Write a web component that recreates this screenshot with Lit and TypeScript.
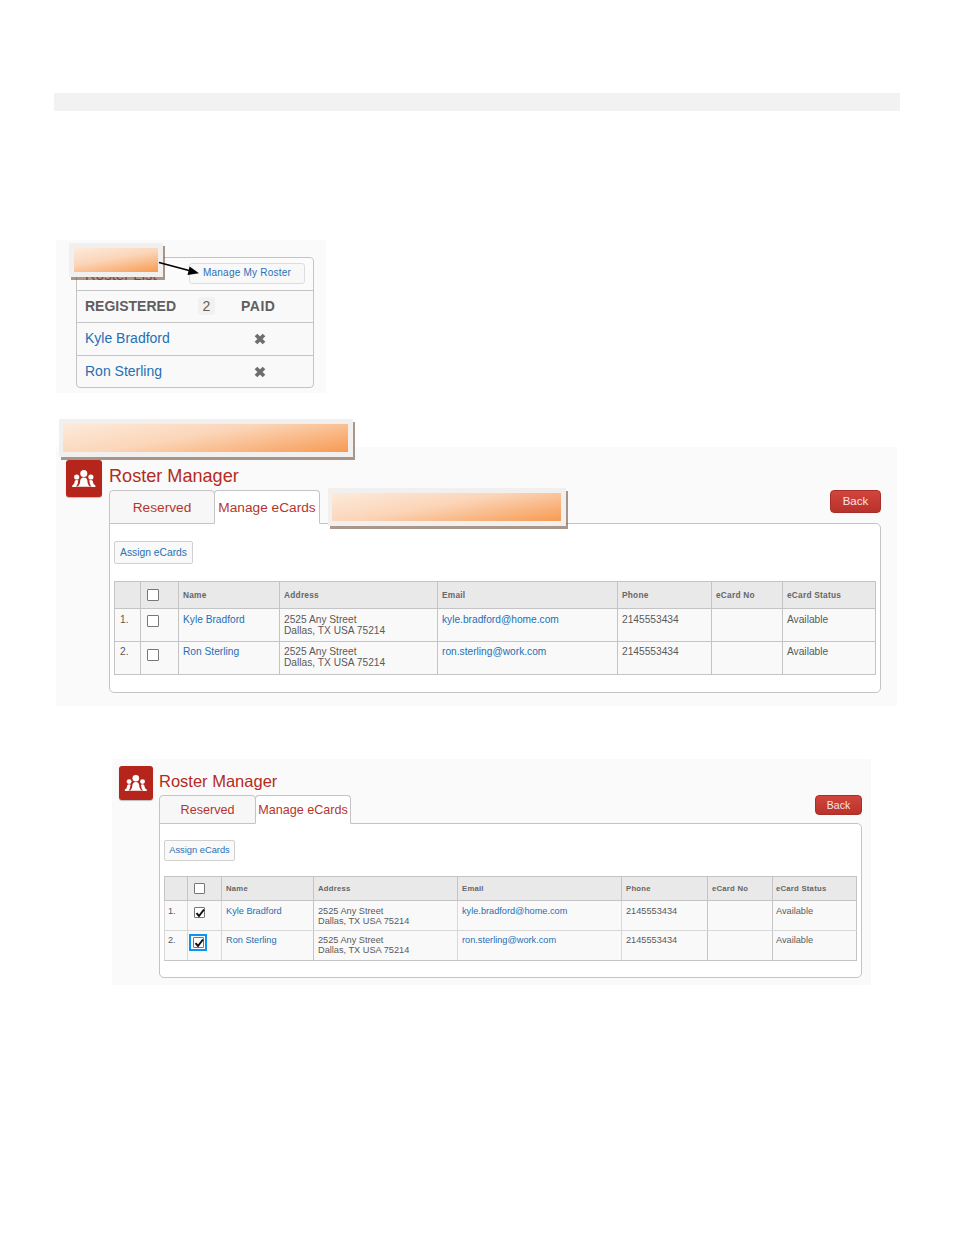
import { LitElement, html, css, svg } from "lit";
import { customElement } from "lit/decorators.js";

const people = html`<svg class="people" viewBox="0 0 36 36" aria-hidden="true"><g fill="#fff"><circle cx="17.800" cy="13" r="3.500"/><path d="M17.800 17c-2.600 0-3.700 1.800-3.700 4.200 0 1.900-1 3.200-2.300 4.800h12c-1.300-1.600-2.300-2.900-2.300-4.800 0-2.400-1.100-4.200-3.700-4.200z"/><circle cx="10.700" cy="16.500" r="2.600"/><path d="M10.700 19.400c-1.600 0-2.100 1.100-2.200 2.400-.1 1.500-1 2.500-2.300 3.200v1.400h23.200V25c-1.300-.7-2.200-1.700-2.300-3.200-.1-1.300-.6-2.400-2.200-2.400-.8 0-1.300.2-1.700.5.2.6.4 1.300.4 2 .1 1.800.9 3 2.100 4.100H9.800c1.200-1.100 2-2.300 2.100-4.100 0-.7.200-1.400.4-2-.4-.3-.8-.5-1.600-.5z"/><circle cx="24.900" cy="16.500" r="2.600"/></g></svg>`;

const arrow = svg`<path d="M0 1.500 31 9.800" stroke="#000" stroke-width="1.700" fill="none"/><path d="M40 12.200 28.500 14 30.600 5.500z" fill="#000"/>`;

const rows = [
  { n: "1.", name: "Kyle Bradford", email: "kyle.bradford@home.com" },
  { n: "2.", name: "Ron Sterling", email: "ron.sterling@work.com" },
];

@customElement("app-root")
export class AppRoot extends LitElement {
  static styles = css`
    :host { display: block; width: 954px; height: 1235px; background: #fff; font-family: "Liberation Sans", Arial, sans-serif; overflow: hidden; }
    .page { padding: 93px 0 0 0; }
    .bar { height: 18px; width: 846px; margin-left: 54px; background: #f2f2f2; }

    .shot { position: relative; background: #fafafa; box-sizing: border-box; }
    .shot-list { width: 270px; height: 153px; margin: 129px 0 0 56px; padding: 17px 12px 0 20px; }
    .shot-big { width: 841px; height: 259px; margin: 54px 0 0 56px; padding: 13px 16px 0 10px; display: flex; gap: 7px; }
    .shot-small { width: 759px; height: 226px; margin: 53px 0 0 112px; padding: 7px 9px 0 7px; display: flex; gap: 6px; }

    .callout { position: absolute; box-sizing: border-box; background: #f1f0ee; box-shadow: 2px 3px 0 rgba(112, 82, 62, .6); padding: 5px; display: flex; }
    .callout i { flex: 1; background: linear-gradient(170deg, #fdeadb 0%, #fbd5b8 45%, #f79a52 100%); }
    .c1 { left: 13px; top: 3px; width: 94px; height: 34px; }
    .c2 { left: 3px; top: -28px; width: 294px; height: 38px; padding-left: 4px; }
    .c3 { left: 272px; top: 41px; width: 238px; height: 38px; padding-left: 4px; }
    .arrow { position: absolute; left: 103px; top: 21px; width: 41px; height: 16px; overflow: visible; }

    .card { border: 1px solid #c4c4c4; border-radius: 4px; background: #f9f9f9; height: 131px; box-sizing: border-box; color: #555; }
    .card-head { height: 32px; display: flex; justify-content: space-between; align-items: flex-start; padding: 5px 8px 0 8px; box-sizing: border-box; background: #fbfbfb; border-radius: 4px 4px 0 0; }
    .list-title { font-size: 15px; color: #b52a22; margin-top: 3px; line-height: 17px; }
    .manage { height: 21px; width: 116px; box-sizing: border-box; border: 1px solid #ddd; border-radius: 3px; background: #f8f8f8; color: #2a70b5; font-size: 10px; line-height: 17px; text-align: center; letter-spacing: .22px; }
    .card-row { height: 33px; box-sizing: border-box; border-top: 1px solid #c4c4c4; display: grid; grid-template-columns: 113px 43px 1fr; align-items: center; padding: 0 0 2px 8px; font-size: 14px; }
    .card-row.reg { height: 32px; font-weight: bold; color: #5f5f5f; }
    .badge { width: 17px; height: 18px; background: #f1f1f1; border-radius: 3px; font-weight: normal; text-align: center; line-height: 19px; font-size: 14px; }
    .card-row a { color: #1f6fb5; grid-column: 1 / 3; }
    .x { padding-left: 13px; display: block; }
    .x svg { width: 12px; height: 12px; display: block; margin-top: 1px; }
    .paid { letter-spacing: .5px; }

    .ico { background: #b5251c; border-radius: 3px; box-shadow: 0 1px 1px rgba(0,0,0,.25); flex: none; display: flex; }
    .people { width: 100%; height: 100%; display: block; }
    .shot-big .ico { width: 36px; height: 37px; }
    .shot-small .ico { width: 34px; height: 34px; }
    .main { flex: 1; min-width: 0; }
    .title { color: #b52a22; }
    .shot-big .title { font-size: 18.100px; height: 30px; line-height: 33px; }
    .shot-small .title { font-size: 16.500px; height: 29px; line-height: 30px; }

    .tabbar { display: flex; justify-content: space-between; align-items: flex-start; position: relative; margin-bottom: -1px; }
    .tabs { display: flex; }
    .tab { box-sizing: border-box; border: 1px solid #c4c4c4; border-radius: 4px 4px 0 0; text-align: center; color: #b5352c; background: #f7f7f7; position: relative; }
    .tab.on { background: #fff; border-bottom-color: #fff; z-index: 1; white-space: nowrap; }
    .shot-big .tab { width: 106px; height: 34px; font-size: 13.700px; line-height: 33px; }
    .shot-big .tab + .tab { margin-left: -1px; }
    .shot-small .tab { width: 97px; height: 29px; font-size: 12.600px; line-height: 29px; }
    .shot-small .tab + .tab { margin-left: -1px; width: 96px; }
    .back { box-sizing: border-box; background: linear-gradient(#d2453d, #b8322b); border: 1px solid #aa2e28; border-radius: 4px; color: #f6e6e6; text-align: center; }
    .shot-big .back { width: 51px; height: 23px; font-size: 11.500px; line-height: 21px; }
    .shot-small .back { width: 47px; height: 20px; font-size: 10.500px; line-height: 18px; }

    .panel { background: #fff; border: 1px solid #c4c4c4; border-radius: 0 5px 5px 5px; box-sizing: border-box; padding: 0 4px; }
    .shot-big .panel { height: 170px; padding-top: 17px; }
    .shot-small .panel { height: 155px; padding-top: 16px; }
    .assign { box-sizing: border-box; border: 1px solid #d0d0d0; border-radius: 2px; background: #f9f9f9; color: #2a70b5; text-align: center; }
    .shot-big .assign { width: 79px; height: 23px; font-size: 10.300px; line-height: 21px; margin-bottom: 17px; }
    .shot-small .assign { width: 71px; height: 21px; font-size: 9.300px; line-height: 19px; margin-bottom: 15px; }

    table { border-collapse: collapse; table-layout: fixed; }
    th, td { border: 1px solid #c4c4c4; text-align: left; vertical-align: top; box-sizing: border-box; padding: 0 4px; color: #5a5a5a; font-weight: normal; overflow: hidden; white-space: nowrap; }
    th { background: #e9e9e9; font-weight: bold; vertical-align: middle; color: #666; letter-spacing: .25px; }
    td { background: #f9f9f9; }
    td a { color: #1f6fb5; }
    .shot-big th { font-size: 8.300px; height: 27px; }
    .shot-big td { font-size: 10.200px; line-height: 11px; height: 33px; padding-top: 5px; }
    .shot-big tr + tr td { padding-top: 4px; }
    .shot-big td:first-child { padding-left: 5px; }
    .shot-small th { font-size: 7.700px; height: 24px; }
    .shot-small td { font-size: 9.200px; line-height: 10px; height: 30px; padding-top: 5px; }
    .shot-small tr + tr td { padding-top: 4px; }
    .shot-small td:first-child { padding-left: 3px; }
    .shot-small th:last-child, .shot-small td:last-child { padding-left: 3px; }
    .shot-small tbody td { border-color: #d8d8d8; }
    .shot-small tbody td:nth-child(3), .shot-small tbody td:nth-child(6), .shot-small tbody td:nth-child(7), .shot-small tbody td:last-child { border-right-color: #c4c4c4; }
    .shot-small tbody tr:last-child td { border-bottom-color: #c4c4c4; }
    th.box, td.box { padding: 0 0 0 6px; line-height: 0; }
    .shot-big td.box { padding-top: 6px; }
    .shot-big tr + tr td.box { padding-top: 7px; }
    .shot-small td.box { padding-top: 6px; }
    .shot-small tr + tr td.box { padding: 3px 0 0 1px; }
    .cb { display: inline-flex; width: 12px; height: 12px; box-sizing: border-box; border: 1px solid #777; border-radius: 1px; background: #fff; vertical-align: top; overflow: visible; }
    .shot-small .cb { width: 11px; height: 11px; }
    .cb svg { width: 12px; height: 12px; margin: -1px; overflow: visible; flex: none; }
    .ring { display: inline-flex; box-sizing: border-box; width: 18px; height: 17px; border: 2px solid #0a96f0; align-items: center; justify-content: center; vertical-align: top; background: #fff; }
  `;

  private cb(on: boolean) {
    return html`<span class="cb">${on ? html`<svg viewBox="0 0 12 12"><path d="M2.500 6.200 5 9 10 2.500" stroke="#111" stroke-width="2" fill="none"/></svg>` : ""}</span>`;
  }

  private table(cols: number[], checked: boolean) {
    const w = cols.reduce((a, b) => a + b, 0);
    return html`<table style="width:${w}px">
      <colgroup>${cols.map((c) => html`<col style="width:${c}px" />`)}</colgroup>
      <thead><tr>
        <th></th><th class="box">${this.cb(false)}</th><th>Name</th><th>Address</th><th>Email</th><th>Phone</th><th>eCard No</th><th>eCard Status</th>
      </tr></thead>
      <tbody>
        ${rows.map((r, i) => html`<tr>
          <td>${r.n}</td>
          <td class="box">${checked && i === 1 ? html`<span class="ring">${this.cb(true)}</span>` : this.cb(checked)}</td>
          <td><a>${r.name}</a></td>
          <td>2525 Any Street<br />Dallas, TX USA 75214</td>
          <td><a>${r.email}</a></td>
          <td>2145553434</td>
          <td></td>
          <td>Available</td>
        </tr>`)}
      </tbody>
    </table>`;
  }

  private manager(cols: number[], checked: boolean) {
    return html`
      <div class="ico">${people}</div>
      <div class="main">
        <div class="title">Roster Manager</div>
        <div class="tabbar">
          <div class="tabs"><div class="tab">Reserved</div><div class="tab on">Manage eCards</div></div>
          <div class="back">Back</div>
        </div>
        <div class="panel">
          <div class="assign">Assign eCards</div>
          ${this.table(cols, checked)}
        </div>
      </div>`;
  }

  render() {
    const xMark = html`<svg viewBox="0 0 12 12"><path d="M2 2l8 8M10 2l-8 8" stroke="#6e6e6e" stroke-width="3.800"/></svg>`;
    return html`<div class="page">
      <div class="bar"></div>

      <section class="shot shot-list">
        <div class="card">
          <div class="card-head"><div class="list-title">Roster List</div><div class="manage">Manage My Roster</div></div>
          <div class="card-row reg"><span>REGISTERED</span><span class="badge">2</span><span class="paid">PAID</span></div>
          ${rows.map((r) => html`<div class="card-row"><a>${r.name}</a><span class="x">${xMark}</span></div>`)}
        </div>
        <div class="callout c1"><i></i></div>
        <svg class="arrow" viewBox="0 0 41 16">${arrow}</svg>
      </section>

      <section class="shot shot-big">
        ${this.manager([26, 38, 101, 158, 180, 94, 71, 93], false)}
        <div class="callout c2"><i></i></div>
        <div class="callout c3"><i></i></div>
      </section>

      <section class="shot shot-small">
        ${this.manager([23, 34, 92, 144, 164, 86, 65, 84], true)}
      </section>
    </div>`;
  }
}
